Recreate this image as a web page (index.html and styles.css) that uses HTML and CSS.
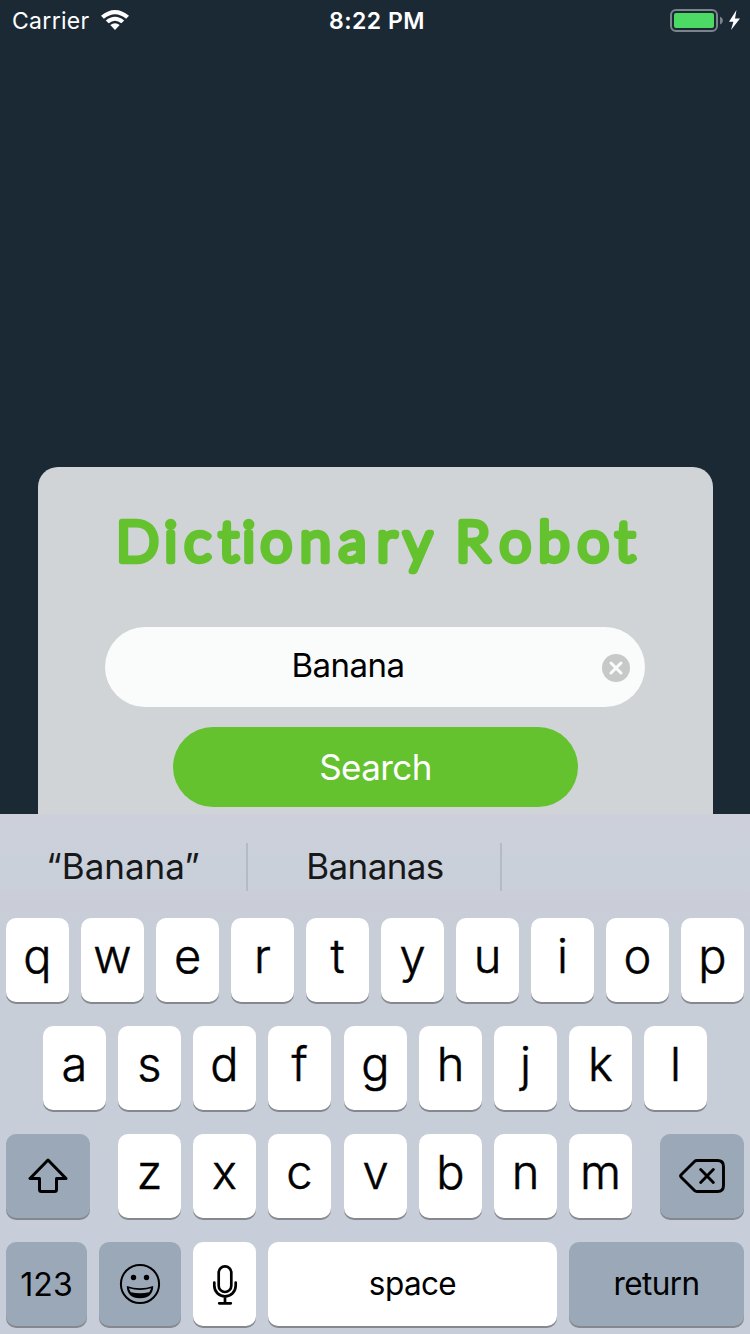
FILE: index.html
```html
<!DOCTYPE html>
<html lang="en">
<head>
<meta charset="utf-8">
<title>Dictionary Robot</title>
<link rel="stylesheet" href="styles.css">
</head>
<body>
<div class="screen">
  <header class="status">
    <div class="status-left">
      <span class="carrier">Carrier</span>
      <svg class="wifi" width="28" height="20" viewBox="0 0 28 20">
        <path d="M0 5.7Q14-5.7 28 5.7L25.1 8.7Q14-.3 2.9 8.7Z"/>
        <path d="M4.8 10.4Q14 2.9 23.2 10.4L20.3 13.3Q14 8.2 7.7 13.3Z"/>
        <path d="M9.3 15.1Q14 11.3 18.7 15.1L14 20Z"/>
      </svg>
    </div>
    <span class="clock">8:22 PM</span>
    <svg class="battery" width="72" height="24" viewBox="0 0 72 24">
      <rect x="1" y="1" width="46" height="21" rx="5" fill="none" stroke="#7b838b" stroke-width="2"/>
      <rect x="4" y="4" width="40" height="15" rx="2" fill="#4cd964"/>
      <path d="M50 7.5Q53 9 53 11.5T50 15.500Z" fill="#7b838b"/>
      <path d="M66.500 1L59 12.700H63.400L61 21L70 9.600H65Z" fill="#fff"/>
    </svg>
  </header>

  <main class="card">
    <svg class="title" width="675" height="110" viewBox="38 492 675 110">
      <text y="560.800"><tspan x="137.500 170.700 197.700 228.500 248.700 276.300 315.500 352.500 387 425.500">Dictionary</tspan> <tspan x="472.800 515.300 554 593.300 625">Robot</tspan></text>
    </svg>
    <div class="field">
      <span class="field-text">Banana</span>
      <svg class="clear" width="28" height="28" viewBox="0 0 28 28">
        <circle cx="14" cy="14" r="14" fill="#c7c8c8"/>
        <path d="M9 9L19 19M19 9L9 19" stroke="#fafcfb" stroke-width="3" stroke-linecap="round"/>
      </svg>
    </div>
    <div class="search">Search</div>
  </main>

  <section class="keyboard">
    <div class="suggestions">
      <span class="suggestion first">“Banana”</span>
      <span class="suggestion second">Bananas</span>
      <span class="suggestion third"></span>
    </div>
    <div class="row">
      <div class="key">q</div><div class="key">w</div><div class="key">e</div><div class="key">r</div><div class="key">t</div><div class="key">y</div><div class="key">u</div><div class="key">i</div><div class="key">o</div><div class="key">p</div>
    </div>
    <div class="row home">
      <div class="key">a</div><div class="key">s</div><div class="key">d</div><div class="key">f</div><div class="key mid">g</div><div class="key">h</div><div class="key">j</div><div class="key">k</div><div class="key">l</div>
    </div>
    <div class="row">
      <div class="key dark shift">
        <svg width="40" height="36" viewBox="0 0 40 36"><path d="M20 2L2 20.500H11.500V31.500Q11.500 33.500 13.500 33.500H26.500Q28.500 33.500 28.500 31.500V20.500H38Z" fill="none" stroke="#000" stroke-width="3" stroke-linejoin="round"/></svg>
      </div>
      <div class="key">z</div><div class="key">x</div><div class="key">c</div><div class="key mid">v</div><div class="key">b</div><div class="key">n</div><div class="key">m</div>
      <div class="key dark delete">
        <svg width="46" height="34" viewBox="0 0 46 34"><path d="M18 1.500H38.500Q44.500 1.500 44.500 7.500V26.500Q44.500 32.500 38.500 32.500H18Q16.500 32.500 15.500 31.500L2.200 18.200Q1 17 2.200 15.800L15.500 2.500Q16.500 1.500 18 1.500ZM21.700 10.500L34.300 23.500M34.300 10.500L21.700 23.500" fill="none" stroke="#000" stroke-width="2.900" stroke-linecap="round" stroke-linejoin="round"/></svg>
      </div>
    </div>
    <div class="row">
      <div class="key dark word numbers">123</div>
      <div class="key dark emoji">
        <svg width="42" height="42" viewBox="0 0 42 42"><circle cx="21" cy="21" r="19.100" fill="none" stroke="#000" stroke-width="2"/><circle cx="14.500" cy="14.500" r="2.700"/><circle cx="27.500" cy="14.500" r="2.700"/><path d="M7.800 23Q21 27.500 34.200 23Q34 35.200 21 35.200T7.800 23Z"/><path d="M10 25.300Q21 28.600 32 25.300Q31.600 27.600 30.200 29.200Q21 31.400 11.800 29.200Q10.400 27.600 10 25.300Z" fill="#9ba8b8"/></svg>
      </div>
      <div class="key mic">
        <svg width="26" height="40" viewBox="0 0 26 40"><g fill="none" stroke="#000" stroke-width="2.700" stroke-linecap="round"><rect x="6.700" y="1.400" width="12.600" height="25.600" rx="6.300"/><path d="M2.300 17.500V20.500C2.300 27 7 31.300 13 31.300S23.700 27 23.700 20.500V17.500M13 31.500V38M7.200 38.300H18.800"/></g></svg>
      </div>
      <div class="key word space">space</div>
      <div class="key dark word return">return</div>
    </div>
  </section>
</div>
</body>
</html>
```

FILE: styles.css
```css
* { box-sizing: border-box; }
body { margin: 0; font-family: Inter, "Liberation Sans", sans-serif; }
.screen { width: 750px; height: 1334px; overflow: hidden; background: #1b2935; display: flex; flex-direction: column; }

.status { height: 42px; flex: none; display: grid; grid-template-columns: 1fr auto 1fr; align-items: center; color: #fff; padding: 0 8px 0 12px; font-size: 23px; line-height: 42px; }
.status-left { display: flex; align-items: center; gap: 11px; }
.carrier { letter-spacing: .3px; font-weight: 400; }
.wifi { fill: #fff; margin-top: -2px; }
.clock { font-weight: 600; letter-spacing: .5px; }
.battery { justify-self: end; }

.card { width: 675px; height: 347px; flex: none; margin: 425px 0 0 38px; padding-top: 25px; background: #d0d4d6; border-radius: 20px 20px 0 0; display: flex; flex-direction: column; align-items: center; }
.title { flex: none; overflow: visible; font: 300 56px Lato, "Liberation Sans", sans-serif; font-kerning: none; text-anchor: middle; fill: #64c22f; stroke: #64c22f; stroke-width: 6.4px; stroke-linejoin: round; stroke-linecap: round; }
.field { width: 540px; height: 80px; flex: none; margin: 25px 1px 0 0; padding: 2px 15px 0 0; border-radius: 40px; background: #fafcfb; display: flex; align-items: center; }
.field-text { flex: 1; padding: 0 11px 7px 0; text-align: center; font-size: 33px; letter-spacing: -.5px; color: #000; }
.search { width: 405px; height: 80px; flex: none; margin-top: 20px; border-radius: 40px; background: #64c22f; color: #fff; font-size: 35px; letter-spacing: -.6px; line-height: 81px; text-align: center; }

.keyboard { height: 520px; flex: none; background: linear-gradient(#cdd0da, #c9d0d9 12%, #cacdd8 17%, #c7ced8 22%, #c8ced9); display: flex; flex-direction: column; gap: 24px; padding: 0 6px; }
.suggestions { height: 80px; flex: none; margin: 0 -6px; padding-top: 29px; display: flex; }
.suggestion { height: 48px; text-align: center; font-size: 35px; line-height: 46px; color: #17181a; }
.first { width: 248px; border-right: 2px solid #b6bac4; }
.second { width: 254px; border-right: 2px solid #b6bac4; letter-spacing: -.6px; padding-left: 2px; }
.row { height: 84px; flex: none; display: flex; gap: 12px; }
.home { padding-left: 37px; }
.key { width: 63px; height: 84px; flex: none; border-radius: 10px; background: #fff; box-shadow: 0 2px 0 #85888e; color: #000; display: flex; align-items: center; justify-content: center; padding-bottom: 9px; font-size: 47px; font-weight: 300; line-height: 1; -webkit-text-stroke: .5px #000; }
.mid { margin-left: 1px; }
.dark { background: #9ba8b8; }
.shift { width: 84px; margin-right: 16px; padding: 0; }
.delete { width: 84px; margin-left: 16px; padding: 0; }
.word { font-size: 31.5px; font-weight: 400; letter-spacing: -.6px; padding: 0; -webkit-text-stroke: 0; }
.numbers { width: 81px; padding: 2px 0 0; font-size: 32px; letter-spacing: 0; }
.emoji { width: 82px; padding: 0; }
.mic { padding: 2px 0 0; }
.space { width: 289px; }
.return { width: 175px; }
```
